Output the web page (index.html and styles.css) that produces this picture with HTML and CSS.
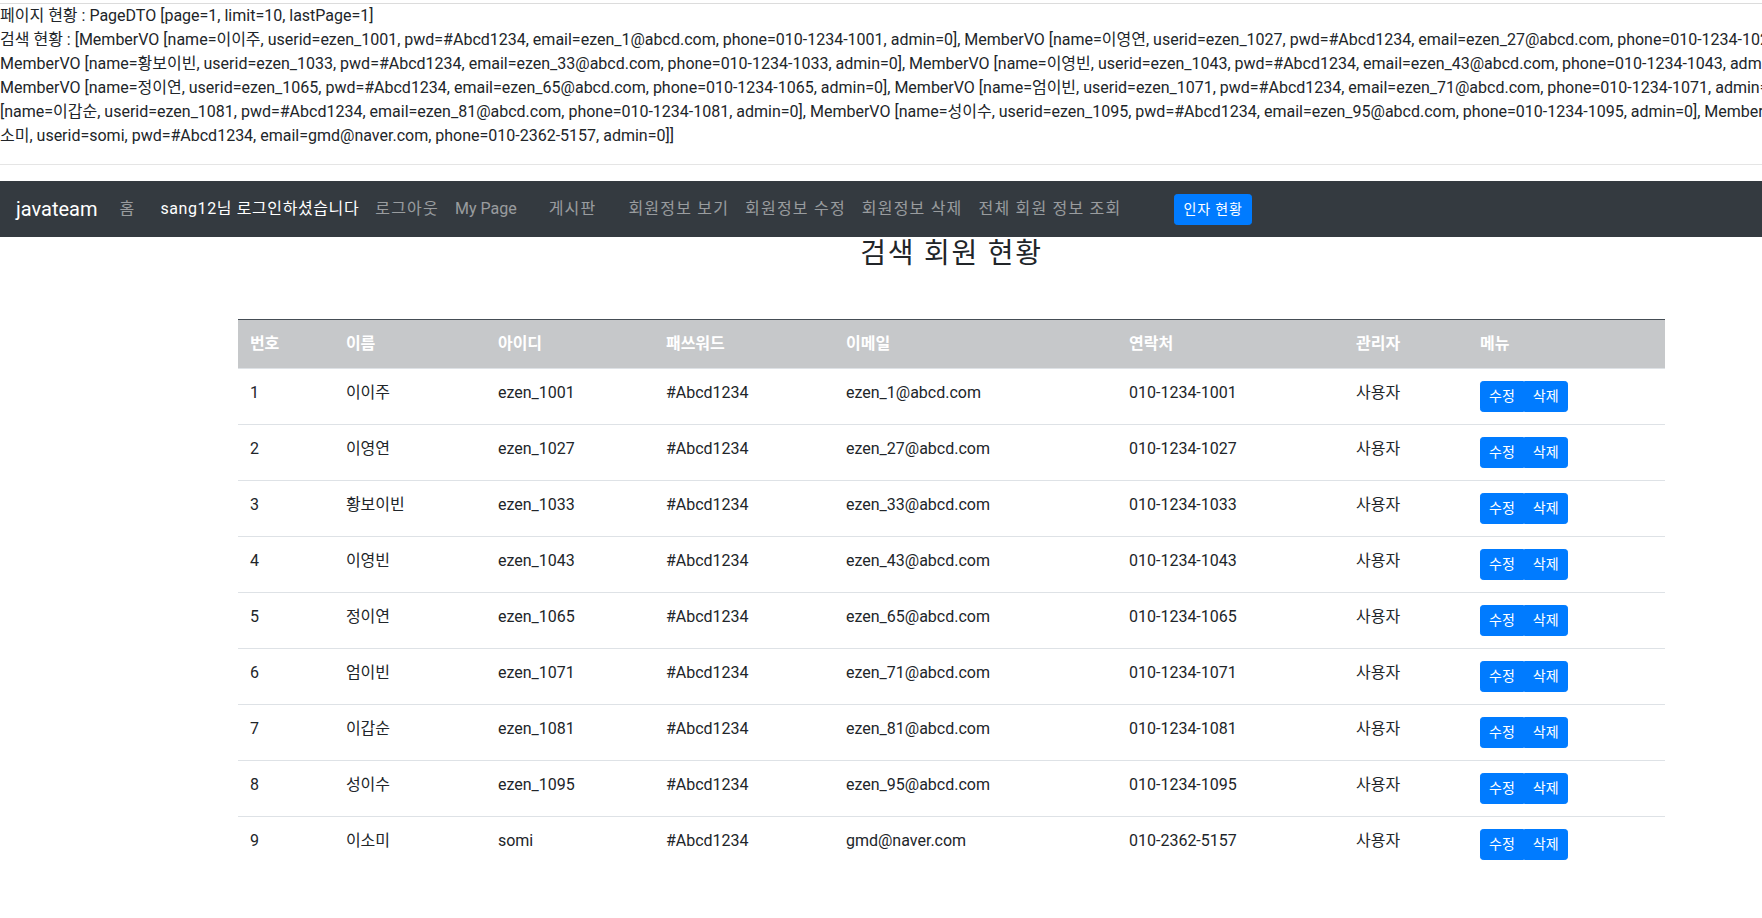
FILE: index.html
```html
<!DOCTYPE html>
<html lang="ko">
<head>
<meta charset="utf-8">
<title>검색 회원 현황</title>
<link rel="stylesheet" href="styles.css">
</head>
<body>
<div class="page">
  <div class="top-rule"></div>
  <div class="dump">페이지 현황 : PageDTO [page=1, limit=10, lastPage=1]<br>검색 현황 : [MemberVO [name=이이주, userid=ezen_1001, pwd=#Abcd1234, email=ezen_1@abcd.com, phone=010-1234-1001, admin=0], MemberVO [name=이영연, userid=ezen_1027, pwd=#Abcd1234, email=ezen_27@abcd.com, phone=010-1234-1027, admin=0], MemberVO [name=황보이빈, userid=ezen_1033, pwd=#Abcd1234, email=ezen_33@abcd.com, phone=010-1234-1033, admin=0], MemberVO [name=이영빈, userid=ezen_1043, pwd=#Abcd1234, email=ezen_43@abcd.com, phone=010-1234-1043, admin=0], MemberVO [name=정이연, userid=ezen_1065, pwd=#Abcd1234, email=ezen_65@abcd.com, phone=010-1234-1065, admin=0], MemberVO [name=엄이빈, userid=ezen_1071, pwd=#Abcd1234, email=ezen_71@abcd.com, phone=010-1234-1071, admin=0], MemberVO [name=이갑순, userid=ezen_1081, pwd=#Abcd1234, email=ezen_81@abcd.com, phone=010-1234-1081, admin=0], MemberVO [name=성이수, userid=ezen_1095, pwd=#Abcd1234, email=ezen_95@abcd.com, phone=010-1234-1095, admin=0], MemberVO [name=이소미, userid=somi, pwd=#Abcd1234, email=gmd@naver.com, phone=010-2362-5157, admin=0]]</div>
  <hr class="sep">

  <nav class="navbar">
    <a class="brand" href="#">javateam</a>
    <a class="nav-link" href="#">홈</a>
    <span class="nav-link nav-user">sang12님 로그인하셨습니다</span>
    <a class="nav-link" href="#">로그아웃</a>
    <a class="nav-link nav-latin" href="#">My Page</a>
    <a class="nav-link nav-board" href="#">게시판</a>
    <a class="nav-link" href="#">회원정보 보기</a>
    <a class="nav-link" href="#">회원정보 수정</a>
    <a class="nav-link" href="#">회원정보 삭제</a>
    <a class="nav-link" href="#">전체 회원 정보 조회</a>
    <button class="btn btn-sm nav-btn" type="button">인자 현황</button>
  </nav>

  <h3 class="title">검색 회원 현황</h3>

  <table class="members">
    <colgroup>
      <col class="c-no"><col class="c-name"><col class="c-id"><col class="c-pw"><col class="c-mail"><col class="c-phone"><col class="c-admin"><col class="c-menu">
    </colgroup>
    <thead>
      <tr><th>번호</th><th>이름</th><th>아이디</th><th>패쓰워드</th><th>이메일</th><th>연락처</th><th>관리자</th><th>메뉴</th></tr>
    </thead>
    <tbody>
      <tr><td>1</td><td>이이주</td><td>ezen_1001</td><td>#Abcd1234</td><td>ezen_1@abcd.com</td><td>010-1234-1001</td><td>사용자</td><td><div class="btn-group"><button class="btn btn-sm" type="button">수정</button><button class="btn btn-sm" type="button">삭제</button></div></td></tr>
      <tr><td>2</td><td>이영연</td><td>ezen_1027</td><td>#Abcd1234</td><td>ezen_27@abcd.com</td><td>010-1234-1027</td><td>사용자</td><td><div class="btn-group"><button class="btn btn-sm" type="button">수정</button><button class="btn btn-sm" type="button">삭제</button></div></td></tr>
      <tr><td>3</td><td>황보이빈</td><td>ezen_1033</td><td>#Abcd1234</td><td>ezen_33@abcd.com</td><td>010-1234-1033</td><td>사용자</td><td><div class="btn-group"><button class="btn btn-sm" type="button">수정</button><button class="btn btn-sm" type="button">삭제</button></div></td></tr>
      <tr><td>4</td><td>이영빈</td><td>ezen_1043</td><td>#Abcd1234</td><td>ezen_43@abcd.com</td><td>010-1234-1043</td><td>사용자</td><td><div class="btn-group"><button class="btn btn-sm" type="button">수정</button><button class="btn btn-sm" type="button">삭제</button></div></td></tr>
      <tr><td>5</td><td>정이연</td><td>ezen_1065</td><td>#Abcd1234</td><td>ezen_65@abcd.com</td><td>010-1234-1065</td><td>사용자</td><td><div class="btn-group"><button class="btn btn-sm" type="button">수정</button><button class="btn btn-sm" type="button">삭제</button></div></td></tr>
      <tr><td>6</td><td>엄이빈</td><td>ezen_1071</td><td>#Abcd1234</td><td>ezen_71@abcd.com</td><td>010-1234-1071</td><td>사용자</td><td><div class="btn-group"><button class="btn btn-sm" type="button">수정</button><button class="btn btn-sm" type="button">삭제</button></div></td></tr>
      <tr><td>7</td><td>이갑순</td><td>ezen_1081</td><td>#Abcd1234</td><td>ezen_81@abcd.com</td><td>010-1234-1081</td><td>사용자</td><td><div class="btn-group"><button class="btn btn-sm" type="button">수정</button><button class="btn btn-sm" type="button">삭제</button></div></td></tr>
      <tr><td>8</td><td>성이수</td><td>ezen_1095</td><td>#Abcd1234</td><td>ezen_95@abcd.com</td><td>010-1234-1095</td><td>사용자</td><td><div class="btn-group"><button class="btn btn-sm" type="button">수정</button><button class="btn btn-sm" type="button">삭제</button></div></td></tr>
      <tr><td>9</td><td>이소미</td><td>somi</td><td>#Abcd1234</td><td>gmd@naver.com</td><td>010-2362-5157</td><td>사용자</td><td><div class="btn-group"><button class="btn btn-sm" type="button">수정</button><button class="btn btn-sm" type="button">삭제</button></div></td></tr>
    </tbody>
  </table>
</div>
</body>
</html>
```
FILE: styles.css
```css
html, body {
  margin: 0;
  padding: 0;
  overflow: hidden;
  background: #fff;
}

body {
  font-family: Roboto, "Noto Sans CJK KR", sans-serif;
  font-size: 16px;
  line-height: 1.5;
  color: #212529;
}

.page {
  width: 1903px;
}

.top-rule {
  margin-top: 3px;
  border-top: 1px solid #dcdcdc;
}

.dump {
  width: 1870px;
  margin: 0;
}

.sep {
  margin: 16px 0;
  border: 0;
  border-top: 1px solid rgba(0, 0, 0, 0.1);
  height: 0;
}

/* navbar */
.navbar {
  display: flex;
  align-items: center;
  background: #343a40;
  padding: 8px 16px;
  height: 40px;
}

.brand {
  font-size: 20px;
  line-height: 30px;
  padding: 5px 0;
  margin-right: 14px;
  color: #fff;
  text-decoration: none;
  white-space: nowrap;
}

.nav-link {
  padding: 8px;
  color: rgba(255, 255, 255, 0.5);
  text-decoration: none;
  white-space: nowrap;
  letter-spacing: 1.2px;
}

.nav-latin {
  letter-spacing: 0;
}

.nav-user {
  margin-left: 9px;
  color: #fff;
  letter-spacing: 0.6px;
}

.nav-board {
  margin-left: 16px;
  margin-right: 16px;
}

.btn {
  display: inline-block;
  font-family: inherit;
  font-weight: 400;
  color: #fff;
  background: #007bff;
  border: 1px solid #007bff;
  cursor: pointer;
  white-space: nowrap;
}

.btn-sm {
  font-size: 14px;
  line-height: 21px;
  padding: 4px 8px;
  border-radius: 3.2px;
}

.nav-btn {
  margin-left: 45px;
  letter-spacing: 0.9px;
}

/* title */
.title {
  margin: 0;
  font-size: 28px;
  font-weight: 400;
  line-height: 1.2;
  letter-spacing: 1.75px;
  text-align: center;
}

/* table */
.members {
  width: 75%;
  margin: 48px auto 0;
  border-collapse: collapse;
  table-layout: fixed;
}

.c-no { width: 96px; }
.c-name { width: 152px; }
.c-id { width: 168px; }
.c-pw { width: 180px; }
.c-mail { width: 283px; }
.c-phone { width: 227px; }
.c-admin { width: 124px; }
.c-menu { width: 197px; }

.members th,
.members td {
  padding: 12px;
  text-align: left;
  vertical-align: top;
}

.members th {
  background: #c6c8ca;
  color: #fff;
  font-weight: 700;
  border-top: 1px solid #454d55;
  border-bottom: 1px solid #dee2e6;
}

.members td {
  border-top: 1px solid #dee2e6;
}

.btn-group {
  display: inline-flex;
}

.btn-group .btn:first-child {
  border-top-right-radius: 0;
  border-bottom-right-radius: 0;
}

.btn-group .btn:last-child {
  border-top-left-radius: 0;
  border-bottom-left-radius: 0;
}
```
